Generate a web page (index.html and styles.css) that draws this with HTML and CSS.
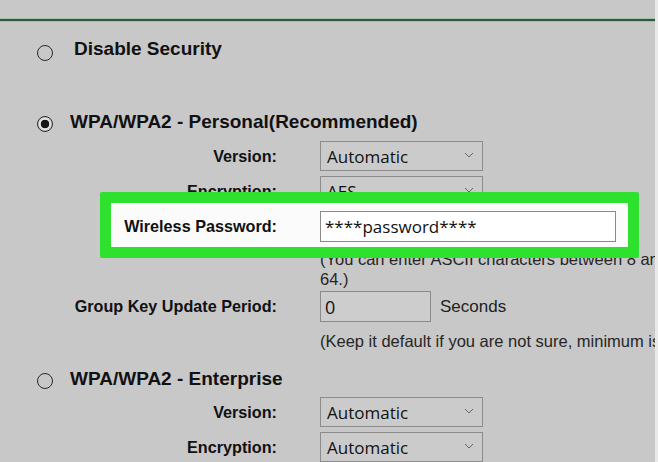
FILE: index.html
```html
<html>
	<head>
		<title>Wireless Security</title>
		<link rel="stylesheet" href="styles.css">
	</head>
	<body>
		<div class="panel">
			<div class="rule"></div>

			<div class="option option-first">
				<span class="radio"></span>
				<span class="title title-indent">Disable Security</span>
			</div>

			<div class="option option-personal">
				<span class="radio radio-on"></span>
				<span class="title">WPA/WPA2 - Personal(Recommended)</span>
			</div>
			<div class="fields fields-personal">
				<div class="field">
					<label class="label">Version:</label>
					<div class="select">Automatic <svg class="chevron" width="10" height="6"><polyline points="1,1 5,5 9,1"/></svg></div>
				</div>
				<div class="field">
					<label class="label">Encryption:</label>
					<div class="select">AES <svg class="chevron" width="10" height="6"><polyline points="1,1 5,5 9,1"/></svg></div>
				</div>
				<div class="field field-pass">
					<label class="label">Wireless Password:</label>
					<div class="text-input">****password****</div>
				</div>
				<div class="hint hint-ascii">(You can enter ASCII characters between 8 an<br>64.)</div>
				<div class="field field-group">
					<label class="label">Group Key Update Period:</label>
					<div class="text-input short-input">0</div>
					<span class="unit">Seconds</span>
				</div>
				<div class="hint hint-keep">(Keep it default if you are not sure, minimum is</div>
			</div>

			<div class="option option-enterprise">
				<span class="radio"></span>
				<span class="title">WPA/WPA2 - Enterprise</span>
			</div>
			<div class="fields fields-enterprise">
				<div class="field">
					<label class="label">Version:</label>
					<div class="select">Automatic <svg class="chevron" width="10" height="6"><polyline points="1,1 5,5 9,1"/></svg></div>
				</div>
				<div class="field">
					<label class="label">Encryption:</label>
					<div class="select">Automatic <svg class="chevron" width="10" height="6"><polyline points="1,1 5,5 9,1"/></svg></div>
				</div>
			</div>
		</div>
	</body>
</html>
```

FILE: styles.css
```css
body {
	margin: 0;
	background-color: #e9e9e9;
	font-family: "Liberation Sans", Arial, sans-serif;
	overflow: hidden;
}

.panel {
	width: 655px;
	height: 462px;
	background-color: #c8c8c8;
	overflow: hidden;
}

.rule {
	margin-top: 19px;
	height: 2px;
	background-color: #36553f;
	box-shadow: 0 -1px 0 #a2c2ab, 0 1px 0 #a2c2ab;
}

.option {
	display: flex;
	align-items: flex-start;
	height: 22px;
	line-height: 22px;
	padding-left: 37px;
}

.option-first {
	margin-top: 17px;
}

.option-first .radio {
	margin-top: 7px;
}

.option-personal {
	margin-top: 51px;
}

.option-enterprise {
	margin-top: 17px;
}

.radio {
	width: 16px;
	height: 16px;
	box-sizing: border-box;
	margin-top: 5px;
	border: 1px solid #2a2a2a;
	border-radius: 50%;
	flex-shrink: 0;
}

.radio-on {
	background: radial-gradient(circle, #161616 0 4px, #e4e4e4 4.6px 5.6px, transparent 6.2px);
}

.title {
	margin-left: 17px;
	font-size: 19px;
	font-weight: bold;
	color: #111;
}

.title-indent {
	margin-left: 21px;
}

.fields-personal {
	margin-top: 8px;
}

.fields-enterprise {
	margin-top: 7px;
}

.field {
	display: flex;
	align-items: center;
	height: 30px;
	margin-bottom: 5px;
}

.label {
	width: 277px;
	flex-shrink: 0;
	text-align: right;
	font-size: 16.2px;
	font-weight: bold;
	color: #111;
}

.select {
	margin-left: 43px;
	width: 163px;
	height: 30px;
	box-sizing: border-box;
	padding: 0 8px 0 6px;
	display: flex;
	align-items: center;
	justify-content: space-between;
	border: 1px solid #8c8c8c;
	background-color: #cbcbcb;
	font-family: "Open Sans", sans-serif;
	font-size: 17px;
	color: #111;
}

.chevron {
	margin-bottom: 3px;
	fill: none;
	stroke: #666;
	stroke-width: 1;
}

.text-input {
	margin-left: 43px;
	width: 296px;
	height: 31px;
	box-sizing: border-box;
	padding-left: 4px;
	display: flex;
	align-items: center;
	border: 1px solid #8a8a8a;
	background-color: #fff;
	font-family: "Open Sans", sans-serif;
	font-size: 17px;
	color: #111;
}

.short-input {
	width: 111px;
	background-color: #cdcdcd;
	font-size: 18px;
}

.field-pass {
	position: relative;
	height: 31px;
	margin-bottom: 0;
}

.field-pass::before {
	content: "";
	position: absolute;
	left: 100px;
	right: 16px;
	top: -19px;
	bottom: -16px;
	border: 11px solid #2fe12f;
	border-radius: 2px;
	background-color: #fbfbfb;
}

.field-pass .label,
.field-pass .text-input {
	position: relative;
}

.hint {
	margin-left: 320px;
	font-size: 16.5px;
	line-height: 20px;
	color: #262626;
	white-space: nowrap;
}

.hint-ascii {
	margin-top: 7px;
}

.field-group {
	height: 31px;
	margin-top: 2px;
	margin-bottom: 0;
}

.unit {
	margin-left: 9px;
	font-size: 17px;
	color: #222;
}

.hint-keep {
	margin-top: 9px;
}
```
